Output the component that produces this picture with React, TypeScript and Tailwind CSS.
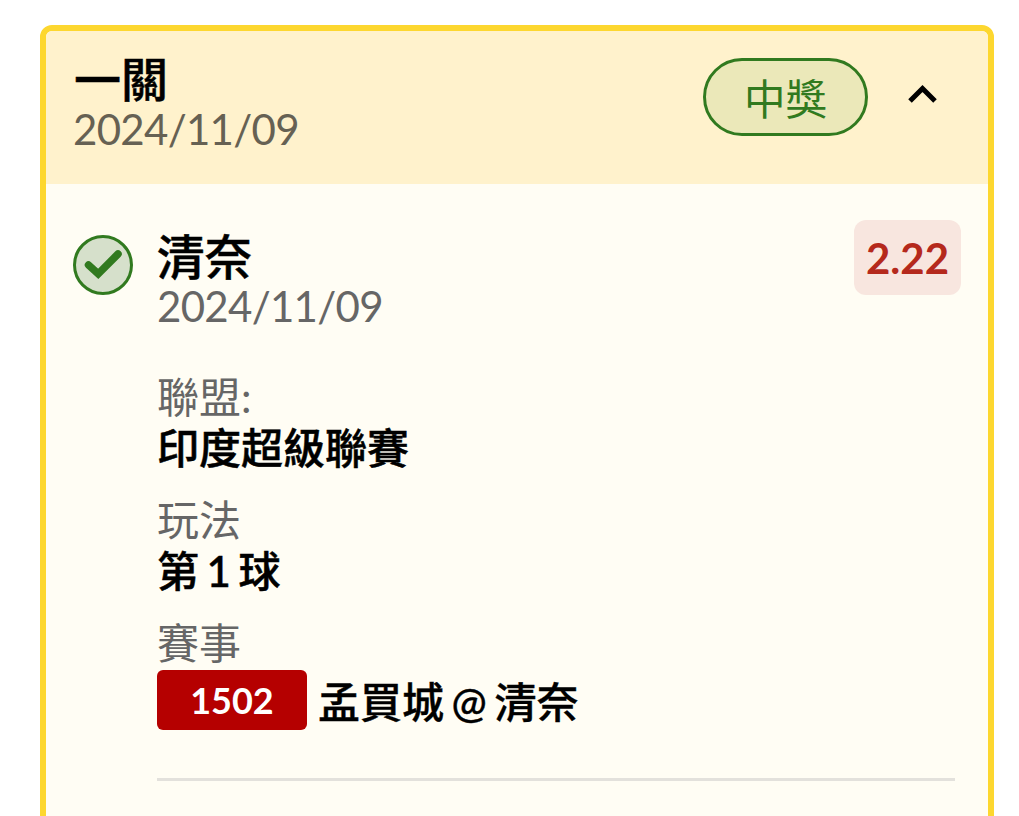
interface Detail { label: string; value: string }

const details: Detail[] = [
  { label: '聯盟:', value: '印度超級聯賽' },
  { label: '玩法', value: '第 1 球' },
]

function CheckBadge() {
  return (
    <svg className="h-[60px] w-[60px] shrink-0" viewBox="0 0 60 60" fill="none">
      <circle cx="30" cy="30" r="28.5" fill="#d6e0cb" stroke="#317a1f" strokeWidth="3" />
      <path d="M15.5 30 L25.2 38.8 L45 19" stroke="#317a1f" strokeWidth="7.5" strokeLinecap="round" />
    </svg>
  )
}

export default function App() {
  return (
    <div className="h-[816px] overflow-hidden bg-white pt-[25px] pr-[25px] pl-10 font-[Lato,'Noto_Sans_CJK_TC',sans-serif]">
      <div className="h-[900px] overflow-hidden rounded-xl border-6 border-[#fdd72f] bg-[#fffdf4]">
        <header className="flex h-[153px] justify-between bg-[#fff2cc] pt-6 pr-[50px] pl-7">
          <div>
            <h1 className="h-[49px] text-[47px] leading-[48px] font-medium text-black [-webkit-text-stroke:0.5px_black]">一關</h1>
            <p className="-ml-px text-[42px] leading-[50px] tracking-[-0.7px] text-[#666153]">2024/11/09</p>
          </div>
          <div className="mt-[3px] flex h-[78px] items-center gap-10">
            <span className="flex h-[78px] w-[165px] items-center justify-center rounded-full border-3 border-[#317a1f] bg-[#ebe8b9] pt-[5px] text-[41.5px] leading-none text-[#317a1f]">中獎</span>
            <svg className="mb-[6px] h-[20px] w-[30px]" viewBox="0 0 30 20" fill="none">
              <path d="M2 17 L14.5 4.5 L27 17" stroke="#000" strokeWidth="5" />
            </svg>
          </div>
        </header>
        <section className="flex pt-[36px] pr-[27px] pl-[27px]">
          <div className="pt-[15px] pr-6"><CheckBadge /></div>
          <div className="flex-1">
            <div className="flex justify-between">
              <div className="pt-[13px]">
                <h2 className="h-[48px] text-[47.5px] leading-[48px] font-medium text-black [-webkit-text-stroke:0.5px_black]">清奈</h2>
                <p className="text-[42px] leading-[50px] tracking-[-0.7px] text-[#666]">2024/11/09</p>
              </div>
              <span className="flex h-[75px] w-[107px] items-center justify-center rounded-xl bg-[#f8e6df] pt-[2px] text-[42px] font-bold text-[#b5291c]">2.22</span>
            </div>
            <div className="mt-[41px]">
              {details.map((d) => (
                <div key={d.label} className="h-[123px]">
                  <p className="text-[42px] leading-[50px] text-[#666]">{d.label}</p>
                  <p className="text-[42px] leading-[52px] font-medium [word-spacing:-3px] text-black [-webkit-text-stroke:0.5px_black]">{d.value}</p>
                </div>
              ))}
              <p className="text-[42px] leading-[50px] text-[#666]">賽事</p>
              <div className="mt-[2px] flex items-center gap-[11px]">
                <span className="flex h-[60px] w-[150px] items-center justify-center rounded-md bg-[#b50000] text-[36px] font-bold text-white">1502</span>
                <span className="pt-[4px] text-[42px] leading-[56px] font-medium [word-spacing:-3px] text-black [-webkit-text-stroke:0.4px_black]">孟買城 @ 清奈</span>
              </div>
            </div>
            <hr className="mt-12 mr-[6px] border-t-3 border-[#e3e1dc]" />
          </div>
        </section>
      </div>
    </div>
  )
}
